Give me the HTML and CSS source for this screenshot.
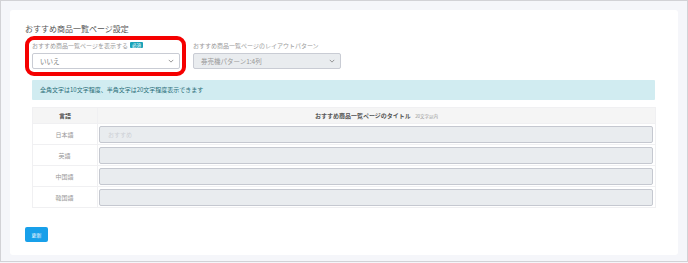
FILE: index.html
```html
<!DOCTYPE html>
<html lang="ja">
<head>
  <meta charset="UTF-8" />
  <meta name="viewport" content="width=device-width, initial-scale=1.0"/>
  <title>おすすめ商品一覧ページ設定</title>
  <link rel="stylesheet" href="styles.css">
</head>
<body>
  <div class="frame">
    <div class="card">
      <h2 class="card-title">おすすめ商品一覧ページ設定</h2>

      <div class="form-row">
        <div class="form-group highlight">
          <label class="form-label">おすすめ商品一覧ページを表示する <span class="badge">必須</span></label>
          <div class="select">
            <span>いいえ</span>
            <svg class="chevron" viewBox="0 0 8 5" width="6" height="4"><path d="M1 1 L4 4 L7 1" fill="none" stroke="#777" stroke-width="1"/></svg>
          </div>
        </div>

        <div class="form-group plain">
          <label class="form-label">おすすめ商品一覧ページのレイアウトパターン</label>
          <div class="select disabled">
            <span>券売機パターン1:4列</span>
            <svg class="chevron" viewBox="0 0 8 5" width="6" height="4"><path d="M1 1 L4 4 L7 1" fill="none" stroke="#777" stroke-width="1"/></svg>
          </div>
        </div>
      </div>

      <div class="section">
        <div class="info">全角文字は10文字程度、半角文字は20文字程度表示できます</div>

        <table class="lang-table">
          <thead>
            <tr>
              <th class="lang-col">言語</th>
              <th>おすすめ商品一覧ページのタイトル <small>20文字以内</small></th>
            </tr>
          </thead>
          <tbody>
            <tr>
              <td class="lang-col">日本語</td>
              <td><div class="text-input placeholder">おすすめ</div></td>
            </tr>
            <tr>
              <td class="lang-col">英語</td>
              <td><div class="text-input"></div></td>
            </tr>
            <tr>
              <td class="lang-col">中国語</td>
              <td><div class="text-input"></div></td>
            </tr>
            <tr>
              <td class="lang-col">韓国語</td>
              <td><div class="text-input"></div></td>
            </tr>
          </tbody>
        </table>
      </div>

      <button class="update-btn">更新</button>
    </div>
  </div>
</body>
</html>
```

FILE: styles.css
```css
* {
  box-sizing: border-box;
}

body {
  margin: 0;
  font-family: "Noto Sans CJK JP", "Noto Sans", sans-serif;
  background: #f5f6fa;
}

.frame {
  width: 688px;
  height: 262px;
  border: 1px solid #d2d2d6;
  background: #f5f6fa;
  padding: 9px 9px 0;
  overflow: hidden;
}

.card {
  background: white;
  border-radius: 3px;
  padding: 14px 22px 13px 15px;
}

.card-title {
  margin: 0;
  font-size: 8px;
  line-height: 10px;
  font-weight: normal;
  color: #555;
}

.form-row {
  display: flex;
  align-items: flex-start;
  margin-top: 2px;
}

.form-group {
  width: 148px;
}

.highlight {
  width: 161px;
  border: 4px solid #f50000;
  border-radius: 9px;
  padding: 0 2px 3px 3px;
  margin-right: 7px;
}

.plain {
  padding-top: 4px;
}

.form-label {
  display: flex;
  align-items: center;
  gap: 2px;
  height: 10px;
  margin-bottom: 3px;
  font-size: 6px;
  color: #9a9a9a;
  white-space: nowrap;
}

.badge {
  display: inline-block;
  background: #17a2b8;
  color: white;
  font-size: 4.5px;
  line-height: 6px;
  padding: 0 2px;
  border-radius: 1px;
}

.select {
  display: flex;
  justify-content: space-between;
  align-items: center;
  width: 148px;
  height: 16px;
  border: 1px solid #c9ccd4;
  border-radius: 2px;
  padding: 0 5px 0 7px;
  font-size: 6.5px;
  color: #777;
  background: white;
}

.select.disabled {
  background: #e9ecef;
  color: #999;
}

.section {
  padding-left: 7px;
}

.info {
  margin-top: 4px;
  width: 623px;
  height: 20px;
  line-height: 20px;
  padding: 0 8px;
  background: #d1ecf1;
  color: #2b6f7a;
  font-size: 6px;
  border-radius: 1px;
}

.lang-table {
  margin-top: 7px;
  width: 624px;
  border-collapse: collapse;
  font-size: 6px;
}

.lang-table th {
  height: 16px;
  background: #f5f5f5;
  color: #555;
  font-weight: bold;
  border: 1px solid #f0f0f2;
  padding: 0;
}

.lang-table th small {
  font-size: 4.5px;
  font-weight: normal;
  color: #999;
  margin-left: 3px;
}

.lang-table td {
  height: 21px;
  border: 1px solid #f0f0f2;
  padding: 2px 2px 1px 1px;
}

.lang-table .lang-col {
  width: 65px;
  text-align: center;
  color: #999;
  font-weight: normal;
}

.lang-table th.lang-col {
  color: #555;
  font-weight: bold;
}

.text-input {
  height: 17px;
  background: #e9ecef;
  border: 1px solid #c5c8d0;
  border-radius: 2px;
  padding-left: 8px;
  line-height: 15px;
  font-size: 6px;
}

.placeholder {
  color: #cdd0d6;
}

.update-btn {
  display: block;
  margin-top: 19px;
  width: 23px;
  height: 15px;
  padding: 0;
  border: none;
  border-radius: 2px;
  background: #18a0ea;
  color: white;
  font-family: inherit;
  font-size: 5px;
  cursor: pointer;
}
```
